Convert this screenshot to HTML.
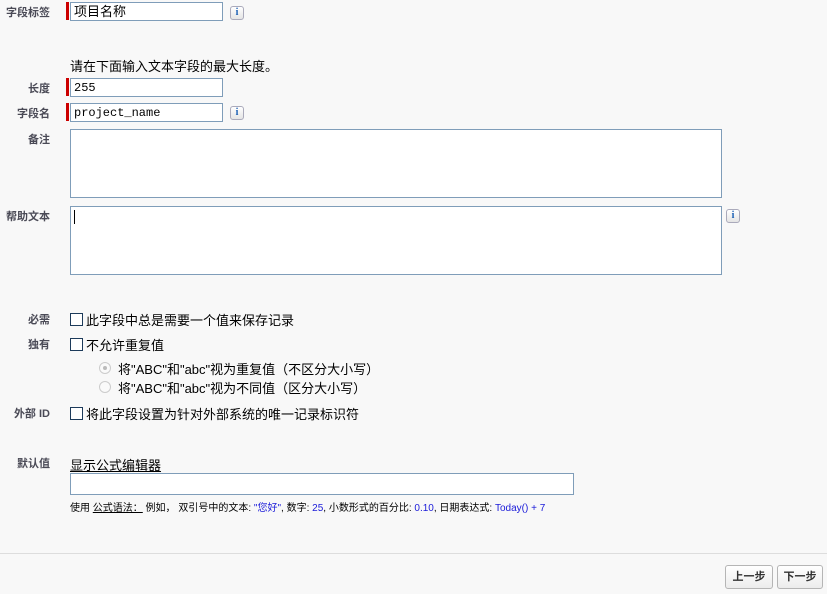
<!DOCTYPE html>
<html><head><meta charset="utf-8"><style>
body{margin:0;width:827px;height:594px;background:#f8f8f8;font-family:"Liberation Sans","Noto Sans CJK SC",sans-serif;font-size:12px;color:#000;position:relative;overflow:hidden}
.a{position:absolute}
.lb{position:absolute;right:777px;font-size:11px;font-weight:bold;color:#4a4a56;white-space:nowrap}
.in{position:absolute;left:70px;background:#fff;border:1px solid #7f9db9;box-sizing:border-box;font-size:13px;padding-left:3px;line-height:18px}
.rq{position:absolute;left:66px;width:3px;background:#c00}
.info{position:absolute;width:14px;height:14px;box-sizing:border-box;border:1px solid #aab;border-radius:3px;background:linear-gradient(#fff,#e4e4e4);color:#1a5fb4;font-size:10px;font-weight:bold;text-align:center;line-height:12px;font-family:"Liberation Serif",serif}
.cb{position:absolute;left:70px;width:13px;height:13px;box-sizing:border-box;border:1px solid #1c3a5a;background:#fff}
.t{position:absolute;font-size:13px;white-space:nowrap}
.rd{position:absolute;left:99px;width:12px;height:12px;border-radius:50%;border:1px solid #ccc;box-sizing:border-box;background:#fafafa}
.btn{position:absolute;top:565px;height:24px;box-sizing:border-box;border:1px solid #b5b5b5;border-radius:3px;background:linear-gradient(#fff,#ececec);font-size:11px;font-weight:bold;text-align:center;line-height:22px;color:#333}
.bl{color:#1b1bd9}
</style></head><body>
<div class="lb" style="top:4px">字段标签</div>
<div class="rq" style="top:2px;height:18px"></div>
<div class="in" style="top:2px;width:153px;height:19px">项目名称</div>
<div class="info" style="left:230px;top:6px">i</div>

<div class="t" style="left:70px;top:56px">请在下面输入文本字段的最大长度。</div>
<div class="lb" style="top:80px">长度</div>
<div class="rq" style="top:78px;height:18px"></div>
<div class="in" style="top:78px;width:153px;height:19px;font-family:'Liberation Mono',monospace;font-size:12px">255</div>
<div class="lb" style="top:105px">字段名</div>
<div class="rq" style="top:103px;height:18px"></div>
<div class="in" style="top:103px;width:153px;height:19px;font-family:'Liberation Mono',monospace;font-size:12px">project_name</div>
<div class="info" style="left:230px;top:106px">i</div>

<div class="lb" style="top:131px">备注</div>
<div class="in" style="top:129px;width:652px;height:69px"></div>
<div class="lb" style="top:208px">帮助文本</div>
<div class="in" style="top:206px;width:652px;height:69px"><div style="position:absolute;left:3px;top:3px;width:1px;height:14px;background:#000"></div></div>
<div class="info" style="left:726px;top:209px">i</div>

<div class="lb" style="top:311px">必需</div>
<div class="cb" style="top:313px"></div>
<div class="t" style="left:86px;top:310px">此字段中总是需要一个值来保存记录</div>
<div class="lb" style="top:336px">独有</div>
<div class="cb" style="top:338px"></div>
<div class="t" style="left:86px;top:335px">不允许重复值</div>
<div class="rd" style="top:362px"><div style="position:absolute;left:3px;top:3px;width:4px;height:4px;border-radius:50%;background:#bbb"></div></div>
<div class="t" style="left:118px;top:359px">将"ABC"和"abc"视为重复值（不区分大小写）</div>
<div class="rd" style="top:381px"></div>
<div class="t" style="left:118px;top:378px">将"ABC"和"abc"视为不同值（区分大小写）</div>
<div class="lb" style="top:405px">外部 ID</div>
<div class="cb" style="top:407px"></div>
<div class="t" style="left:86px;top:404px">将此字段设置为针对外部系统的唯一记录标识符</div>

<div class="lb" style="top:455px">默认值</div>
<div class="t" style="left:70px;top:455px;text-decoration:underline">显示公式编辑器</div>
<div class="in" style="top:473px;width:504px;height:22px"></div>
<div class="a" style="left:70px;top:499px;font-size:10px;white-space:nowrap">使用 <u>公式语法：</u> 例如， 双引号中的文本: <span class="bl">"您好"</span>, 数字: <span class="bl">25</span>, 小数形式的百分比: <span class="bl">0.10</span>, 日期表达式: <span class="bl">Today() + 7</span></div>

<div class="a" style="left:0;top:553px;width:827px;height:1px;background:#ddd"></div>
<div class="btn" style="left:725px;width:48px">上一步</div>
<div class="btn" style="left:777px;width:46px">下一步</div>
</body></html>
